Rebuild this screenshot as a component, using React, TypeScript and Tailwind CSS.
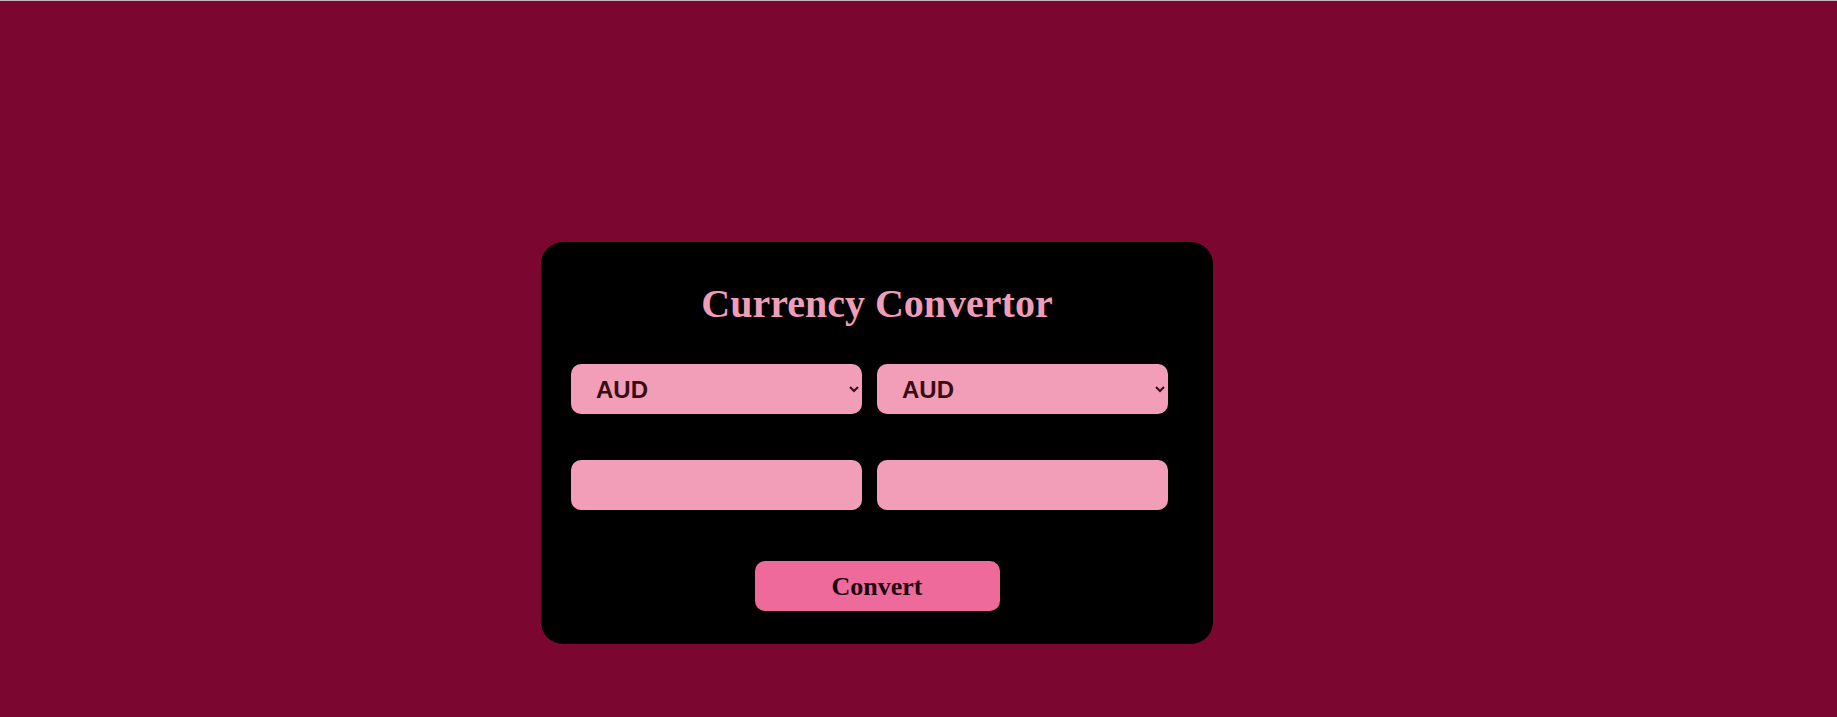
import { useState } from 'react'

const currencies = ['AUD', 'USD', 'EUR', 'GBP', 'INR', 'JPY']

export default function App() {
  const [from, setFrom] = useState('AUD')
  const [to, setTo] = useState('AUD')

  return (
    <div className="min-h-[717px] w-full bg-[#7b0630]">
      <div className="h-px w-full bg-[#c9b7bd]" />
      <div className="flex pl-[541px] pt-[241px]">
        <div className="flex h-[402px] w-[672px] flex-col rounded-[22px] bg-black px-[30px] pt-[38px]">
          <h1 className="text-center font-['Liberation_Serif',serif] text-[40px] font-bold leading-[48px] text-[#f09dba]">
            Currency Convertor
          </h1>

          <div className="mt-[36px] flex gap-[15px]">
            <select
              value={from}
              onChange={(e) => setFrom(e.target.value)}
              className="h-[50px] w-[291px] rounded-[10px] bg-[#f29eb8] pl-[21px] pr-[8px] font-['Liberation_Sans',sans-serif] text-[24px] font-bold text-[#3a0d14] outline-none"
            >
              {currencies.map((c) => (
                <option key={c}>{c}</option>
              ))}
            </select>
            <select
              value={to}
              onChange={(e) => setTo(e.target.value)}
              className="h-[50px] w-[291px] rounded-[10px] bg-[#f29eb8] pl-[21px] pr-[8px] font-['Liberation_Sans',sans-serif] text-[24px] font-bold text-[#3a0d14] outline-none"
            >
              {currencies.map((c) => (
                <option key={c}>{c}</option>
              ))}
            </select>
          </div>

          <div className="mt-[46px] flex gap-[15px]">
            <input
              type="number"
              className="h-[50px] w-[291px] rounded-[10px] bg-[#f29eb8] px-4 font-['Liberation_Sans',sans-serif] text-[20px] text-[#3a0d14] outline-none"
            />
            <input
              type="number"
              readOnly
              className="h-[50px] w-[291px] rounded-[10px] bg-[#f29eb8] px-4 font-['Liberation_Sans',sans-serif] text-[20px] text-[#3a0d14] outline-none"
            />
          </div>

          <div className="mt-[51px] flex justify-center">
            <button
              type="button"
              className="h-[50px] w-[245px] rounded-[10px] bg-[#ed6a9b] font-['Liberation_Serif',serif] text-[26px] font-bold text-[#1b0610]"
            >
              Convert
            </button>
          </div>
        </div>
      </div>
    </div>
  )
}
